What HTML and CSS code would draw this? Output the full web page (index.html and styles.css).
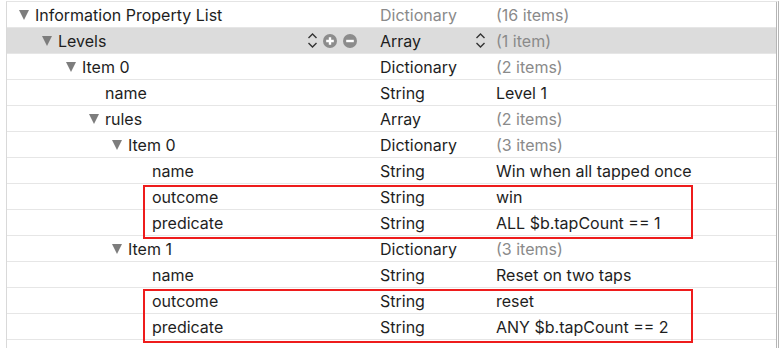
FILE: index.html
```html
<!DOCTYPE html>
<html lang="en">
<head>
  <meta charset="UTF-8">
  <title>Info.plist</title>
  <link rel="stylesheet" href="styles.css">
</head>
<body>
  <div class="plist">
    <div class="row">
      <div class="key lvl-0"><span class="disc"></span>Information Property List</div>
      <div class="type muted">Dictionary</div>
      <div class="value muted">(16 items)</div>
    </div>
    <div class="row selected">
      <div class="key lvl-1"><span class="disc"></span>Levels
        <span class="tools">
          <svg class="stepper" width="11" height="17" viewBox="0 0 11 17"><path d="M1.5 6 L5.5 2 L9.5 6 M1.5 11 L5.5 15 L9.5 11" fill="none" stroke="#333" stroke-width="1.4"/></svg>
          <svg class="btn" width="14" height="14" viewBox="0 0 14 14"><circle cx="7" cy="7" r="7" fill="#8c8c8c"/><path d="M3.2 7 H10.8 M7 3.2 V10.8" stroke="#fff" stroke-width="2.4"/></svg>
          <svg class="btn" width="14" height="14" viewBox="0 0 14 14"><circle cx="7" cy="7" r="7" fill="#8c8c8c"/><path d="M3.2 7 H10.8" stroke="#fff" stroke-width="2.4"/></svg>
        </span>
      </div>
      <div class="type">Array
        <svg class="stepper type-stepper" width="11" height="17" viewBox="0 0 11 17"><path d="M1.5 6 L5.5 2 L9.5 6 M1.5 11 L5.5 15 L9.5 11" fill="none" stroke="#333" stroke-width="1.4"/></svg>
      </div>
      <div class="value muted">(1 item)</div>
    </div>
    <div class="row">
      <div class="key lvl-2"><span class="disc"></span>Item 0</div>
      <div class="type">Dictionary</div>
      <div class="value muted">(2 items)</div>
    </div>
    <div class="row">
      <div class="key lvl-3"><span class="leaf"></span>name</div>
      <div class="type">String</div>
      <div class="value">Level 1</div>
    </div>
    <div class="row">
      <div class="key lvl-3"><span class="disc"></span>rules</div>
      <div class="type">Array</div>
      <div class="value muted">(2 items)</div>
    </div>
    <div class="row">
      <div class="key lvl-4"><span class="disc"></span>Item 0</div>
      <div class="type">Dictionary</div>
      <div class="value muted">(3 items)</div>
    </div>
    <div class="row">
      <div class="key lvl-5"><span class="leaf"></span>name</div>
      <div class="type">String</div>
      <div class="value">Win when all tapped once</div>
    </div>
    <div class="group">
      <div class="row">
        <div class="key lvl-5"><span class="leaf"></span>outcome</div>
        <div class="type">String</div>
        <div class="value">win</div>
      </div>
      <div class="row">
        <div class="key lvl-5"><span class="leaf"></span>predicate</div>
        <div class="type">String</div>
        <div class="value">ALL $b.tapCount == 1</div>
      </div>
      <div class="highlight"></div>
    </div>
    <div class="row">
      <div class="key lvl-4"><span class="disc"></span>Item 1</div>
      <div class="type">Dictionary</div>
      <div class="value muted">(3 items)</div>
    </div>
    <div class="row">
      <div class="key lvl-5"><span class="leaf"></span>name</div>
      <div class="type">String</div>
      <div class="value">Reset on two taps</div>
    </div>
    <div class="group">
      <div class="row">
        <div class="key lvl-5"><span class="leaf"></span>outcome</div>
        <div class="type">String</div>
        <div class="value">reset</div>
      </div>
      <div class="row">
        <div class="key lvl-5"><span class="leaf"></span>predicate</div>
        <div class="type">String</div>
        <div class="value">ANY $b.tapCount == 2</div>
      </div>
      <div class="highlight"></div>
    </div>
  </div>
</body>
</html>
```

FILE: styles.css
```css
body {
  margin: 0;
  background: #fff;
  font-family: 'Inter', 'Helvetica', sans-serif;
  font-size: 16px;
  color: #1e1e1e;
  height: 348px;
  overflow: hidden;
}

.plist {
  margin-left: 6px;
  width: 769px;
  min-height: 348px;
  border-left: 1px solid #d9d9d9;
  border-right: 3px double #b5b5b5;
  border-top: 1px solid #e4e4e4;
  margin-top: 1px;
}

.row {
  display: flex;
  height: 25px;
  border-bottom: 1px solid #e6e6e6;
  align-items: center;
}

.row.selected {
  background: #dcdcdc;
}

.key,
.type,
.value {
  box-sizing: border-box;
  white-space: nowrap;
}

.key {
  flex: none;
  width: 373px;
  display: flex;
  align-items: center;
}

.lvl-0 { padding-left: 12px; }
.lvl-1 { padding-left: 35px; }
.lvl-2 { padding-left: 59px; }
.lvl-3 { padding-left: 82px; }
.lvl-4 { padding-left: 105px; }
.lvl-5 { padding-left: 129px; }

.disc,
.leaf {
  width: 16px;
  flex: none;
}

.disc::before {
  content: '';
  display: block;
  width: 0;
  height: 0;
  border-left: 5.5px solid transparent;
  border-right: 5.5px solid transparent;
  border-top: 10px solid #7d7d7d;
}

.tools {
  margin-left: auto;
  margin-right: 23px;
  display: flex;
  align-items: center;
  gap: 5px;
}

.tools .btn + .btn {
  margin-left: 1px;
}

.type {
  flex: none;
  width: 116px;
  display: flex;
  align-items: center;
}

.type-stepper {
  margin-left: auto;
  margin-right: 10px;
}

.value {
  flex: 1;
}

.muted {
  color: #8a8a8a;
}

.group {
  position: relative;
}

.highlight {
  position: absolute;
  left: 136px;
  top: 1px;
  width: 546px;
  height: 50px;
  border: 2px solid #ee1c1c;
  pointer-events: none;
}
```
